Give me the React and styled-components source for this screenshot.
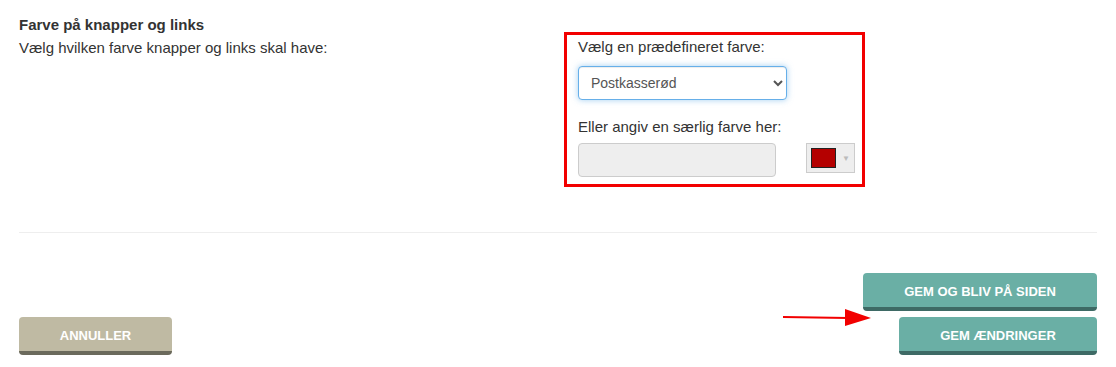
import React from 'react'
import styled, { createGlobalStyle } from 'styled-components'

const GlobalStyle = createGlobalStyle`
    body {
        margin: 0;
        background: #fff;
        font-family: "Liberation Sans", Arial, sans-serif;
        color: #333;
    }
`;

const Page = styled.div`
    position: relative;
    padding: 15px 19px 0;
`;

const SettingRow = styled.div`
    display: grid;
    grid-template-columns: 545px 1fr;
`;

const Title = styled.div`
    font-size: 15px;
    font-weight: bold;
    line-height: 20px;
`;

const Description = styled.div`
    font-size: 15px;
    line-height: 20px;
    margin-top: 3px;
`;

const Highlight = styled.div`
    box-sizing: border-box;
    width: 301px;
    border: 3px solid #f20000;
    padding: 2px 11px 7px;
    margin-top: 17px;
`;

const Label = styled.div`
    font-size: 15px;
    line-height: 20px;
    margin-bottom: ${p => p.$gap || 9}px;
    margin-top: ${p => p.$top || 0}px;
`;

const Select = styled.select`
    display: block;
    width: 209px;
    height: 34px;
    padding: 0 8px;
    font-family: "Liberation Sans", Arial, sans-serif;
    font-size: 14px;
    color: #555;
    background: #fff;
    border: 1px solid #66afe9;
    border-radius: 4px;
    box-shadow: inset 0 1px 1px rgba(0,0,0,.075), 0 0 6px rgba(102,175,233,.6);
    outline: none;
`;

const ColorRow = styled.div`
    display: flex;
    align-items: flex-start;
    justify-content: space-between;
`;

const ColorInput = styled.input`
    box-sizing: border-box;
    width: 198px;
    height: 34px;
    background: #eee;
    border: 1px solid #ccc;
    border-radius: 4px;
`;

const Swatch = styled.div`
    box-sizing: border-box;
    width: 49px;
    height: 30px;
    margin-right: -4px;
    display: flex;
    align-items: center;
    gap: 6px;
    padding-left: 4px;
    background: #eee;
    border: 1px solid #ccc;
`;

const SwatchColor = styled.div`
    width: 25px;
    height: 20px;
    box-sizing: border-box;
    background: #b40000;
    border: 1px solid #222;
`;

const SwatchArrow = styled.span`
    font-size: 8px;
    color: #bbb;
`;

const Divider = styled.hr`
    border: 0;
    border-top: 1px solid #eee;
    margin: 45px 0 40px;
`;

const Footer = styled.div`
    display: flex;
    justify-content: space-between;
    align-items: flex-end;
`;

const SaveStack = styled.div`
    display: flex;
    flex-direction: column;
    align-items: flex-end;
    gap: 6px;
`;

const Button = styled.button`
    box-sizing: border-box;
    width: ${p => p.$width}px;
    height: 38px;
    padding: 3px 0 0;
    border: 0;
    border-bottom: 4px solid ${p => p.$shade};
    border-radius: 4px;
    background: ${p => p.$color};
    color: #fff;
    font-family: "Liberation Sans", Arial, sans-serif;
    font-size: 13px;
    font-weight: bold;
    text-transform: uppercase;
    cursor: pointer;
`;

const Arrow = styled.svg`
    position: absolute;
    left: 782px;
    top: 308px;
`;

export default function App() {
    return (
        <Page>
            <GlobalStyle />
            <SettingRow>
                <div>
                    <Title>Farve på knapper og links</Title>
                    <Description>Vælg hvilken farve knapper og links skal have:</Description>
                </div>
                <Highlight>
                    <Label>Vælg en prædefineret farve:</Label>
                    <Select defaultValue="postkasserod">
                        <option value="postkasserod">Postkasserød</option>
                    </Select>
                    <Label $top={17} $gap={6}>Eller angiv en særlig farve her:</Label>
                    <ColorRow>
                        <ColorInput type="text" disabled />
                        <Swatch>
                            <SwatchColor />
                            <SwatchArrow>▼</SwatchArrow>
                        </Swatch>
                    </ColorRow>
                </Highlight>
            </SettingRow>
            <Divider />
            <Footer>
                <Button $width={153} $color="#bfbaa3" $shade="#6b6a5c">Annuller</Button>
                <SaveStack>
                    <Button $width={234} $color="#6aafa5" $shade="#3e6a65">Gem og bliv på siden</Button>
                    <Button $width={198} $color="#6aafa5" $shade="#3e6a65">Gem ændringer</Button>
                </SaveStack>
            </Footer>
            <Arrow width="92" height="20" viewBox="0 0 92 20">
                <line x1="1" y1="9" x2="66" y2="10" stroke="#f20000" strokeWidth="2" />
                <polygon points="63,1 89,10 63,18" fill="#f20000" />
            </Arrow>
        </Page>
    )
}
